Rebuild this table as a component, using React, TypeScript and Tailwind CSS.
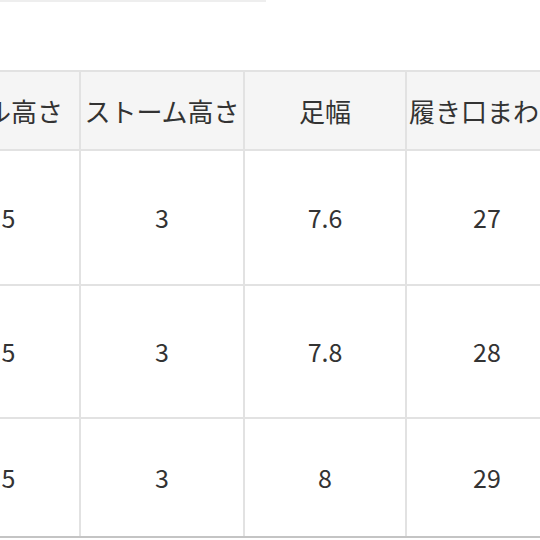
const HEADERS = ["ヒール高さ", "ストーム高さ", "足幅", "履き口まわり"];

const ROWS = [
  { h: "h-[135px]", cells: ["4.5", "3", "7.6", "27"] },
  { h: "h-[133px]", cells: ["4.5", "3", "7.8", "28"] },
  { h: "h-[119px]", cells: ["4.5", "3", "8", "29"] },
];

export default function App() {
  return (
    <div
      className="relative w-[540px] h-[540px] overflow-hidden bg-white text-[#333333]"
      style={{ fontFamily: '"Noto Sans CJK JP", "Noto Sans", sans-serif' }}
    >
      {/* cut-off element above */}
      <div className="h-[2px] w-[266px] bg-[#eeeeee]" />

      <div className="mt-[68px] -ml-[85px]">
        <table className="w-[652px] table-fixed border-collapse">
          <colgroup>
            <col className="w-[164px]" />
            <col className="w-[164px]" />
            <col className="w-[162px]" />
            <col className="w-[162px]" />
          </colgroup>
          <thead>
            <tr className="h-[79px] bg-[#f5f5f5]">
              {HEADERS.map((t) => (
                <th
                  key={t}
                  className="border-2 border-[#e2e2e2] p-0 text-center text-[26px] font-normal leading-none whitespace-nowrap"
                >
                  {t}
                </th>
              ))}
            </tr>
          </thead>
          <tbody>
            {ROWS.map((row, i) => (
              <tr key={i} className={row.h}>
                {row.cells.map((c, j) => (
                  <td
                    key={j}
                    className={
                      "border-2 border-[#e2e2e2] p-0 text-center text-[25px] leading-none " +
                      (i === ROWS.length - 1 ? "border-b-[#c4c4c4]" : "")
                    }
                  >
                    {c}
                  </td>
                ))}
              </tr>
            ))}
          </tbody>
        </table>
      </div>
    </div>
  );
}
